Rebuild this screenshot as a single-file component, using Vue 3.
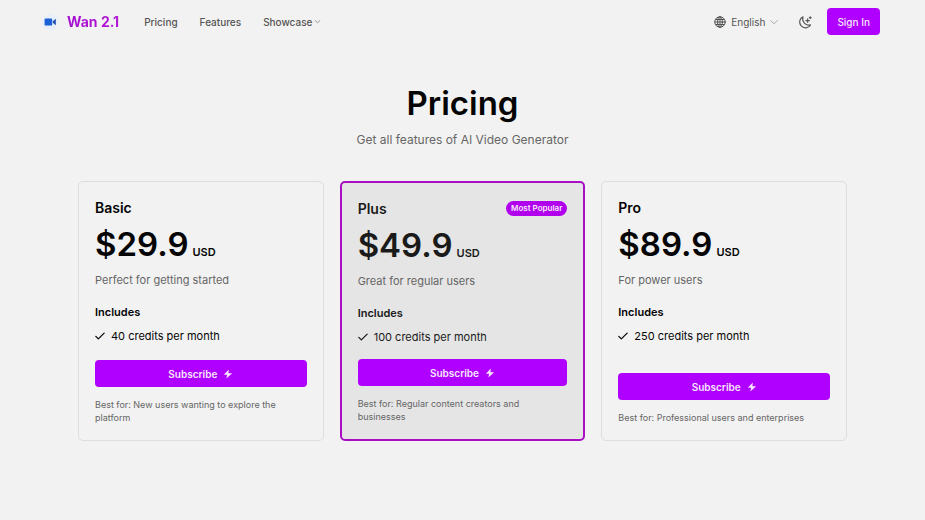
<script setup>
const plans = [
  {
    name: 'Basic',
    price: '$29.9',
    description: 'Perfect for getting started',
    feature: '40 credits per month',
    note: 'Best for: New users wanting to explore the platform',
  },
  {
    name: 'Plus',
    price: '$49.9',
    description: 'Great for regular users',
    feature: '100 credits per month',
    note: 'Best for: Regular content creators and businesses',
    badge: 'Most Popular',
  },
  {
    name: 'Pro',
    price: '$89.9',
    description: 'For power users',
    feature: '250 credits per month',
    note: 'Best for: Professional users and enterprises',
  },
]
</script>

<template>
  <div class="page">
    <header class="header">
      <a class="brand" href="#">
        <svg class="logo" viewBox="0 0 16 16" aria-hidden="true">
          <circle cx="8" cy="8" r="8" fill="#e8eefa" />
          <rect x="2.6" y="4.4" width="7.6" height="7.2" rx="1.2" fill="#1c5fd6" />
          <path d="M10.8 7.2 13.8 4.8v6.4l-3-2.4z" fill="#1c4fae" />
        </svg>
        <span class="brand-name">Wan 2.1</span>
      </a>
      <nav class="nav">
        <a href="#pricing">Pricing</a>
        <a href="#features">Features</a>
        <button type="button" class="nav-menu">
          Showcase
          <svg class="caret" viewBox="0 0 24 24" aria-hidden="true"><path d="m4 9 8 7 8-7" /></svg>
        </button>
      </nav>
      <div class="actions">
        <button type="button" class="language">
          <svg class="globe" viewBox="0 0 24 24" aria-hidden="true">
            <circle cx="12" cy="12" r="10.5" />
            <ellipse cx="12" cy="12" rx="4.8" ry="10.5" />
            <path d="M12 2v20M2 12h20M3.5 7h17M3.5 17h17" />
          </svg>
          <span>English</span>
          <svg class="chevron" viewBox="0 0 24 24" aria-hidden="true"><path d="m2 8 10 9 10-9" /></svg>
        </button>
        <button type="button" class="theme" aria-label="Toggle theme">
          <svg viewBox="0 0 24 24" aria-hidden="true">
            <path d="M8.5 3A10 10 0 1 0 21.5 17 11 11 0 0 1 8.500 3z" />
            <path d="M16.500 6.500v6M13.500 9.500h6M21 3v3M19.500 4.500h3" />
          </svg>
        </button>
        <button type="button" class="sign-in">Sign In</button>
      </div>
    </header>

    <main id="pricing" class="pricing">
      <h1>Pricing</h1>
      <p class="subtitle">Get all features of AI Video Generator</p>

      <div class="plans">
        <section v-for="plan in plans" :key="plan.name" class="plan" :class="{ featured: plan.badge }">
          <div class="plan-head">
            <h2>{{ plan.name }}</h2>
            <span v-if="plan.badge" class="badge">{{ plan.badge }}</span>
          </div>
          <div class="price">
            <span class="amount">{{ plan.price }}</span>
            <span class="currency">USD</span>
          </div>
          <p class="description">{{ plan.description }}</p>
          <h3>Includes</h3>
          <ul>
            <li>
              <svg class="check" viewBox="0 0 24 24" aria-hidden="true"><path d="m2 13 6 6L22 5" /></svg>
              <span>{{ plan.feature }}</span>
            </li>
          </ul>
          <div class="plan-foot">
            <button type="button" class="subscribe">
              Subscribe
              <svg viewBox="0 0 24 24" aria-hidden="true"><path d="M14 1 2 14h8L8 23 22 10h-9z" /></svg>
            </button>
            <p class="note">{{ plan.note }}</p>
          </div>
        </section>
      </div>
    </main>
  </div>
</template>

<style>
body {
  background: #f2f2f2;
}
</style>

<style scoped>
.page {
  min-height: 100vh;
  background: #f2f2f2;
  color: #050505;
  font-family: Inter, "Liberation Sans", sans-serif;
  font-size: 11px;
}

h1, h2, h3, p, ul {
  margin: 0;
  padding: 0;
}

button {
  border: 0;
  padding: 0;
  background: none;
  color: inherit;
  font: inherit;
  cursor: pointer;
}

a {
  color: inherit;
  text-decoration: none;
}

svg {
  flex: none;
  fill: none;
  stroke: currentColor;
  stroke-width: 2;
  stroke-linecap: round;
  stroke-linejoin: round;
}

.header {
  display: flex;
  align-items: center;
  padding: 8px 45px 8px 42px;
  color: #555;
  font-size: 10px;
}

.brand {
  display: flex;
  align-items: center;
  gap: 9px;
}

.logo {
  width: 16px;
  height: 16px;
  stroke: none;
}

.brand-name {
  background: linear-gradient(90deg, #a50fd0, #b316d6);
  background-clip: text;
  color: transparent;
  font-size: 14px;
  font-weight: 700;
}

.nav {
  display: flex;
  align-items: center;
  gap: 22px;
  margin-left: 25px;
  font-weight: 500;
}

.nav-menu {
  display: flex;
  align-items: center;
  gap: 2px;
}

.caret {
  width: 7px;
  height: 7px;
}

.actions {
  display: flex;
  align-items: center;
  margin-left: auto;
}

.language {
  display: flex;
  align-items: center;
  gap: 5px;
}

.globe {
  width: 12px;
  height: 12px;
}

.chevron {
  width: 8px;
  height: 8px;
  color: #858585;
}

.theme {
  display: flex;
  margin: 0 15px 0 20px;
}

.theme svg {
  width: 14px;
  height: 14px;
}

.sign-in {
  height: 27px;
  padding: 0 10px;
  border-radius: 4px;
  background: #b000ff;
  color: #f7e6ff;
  font-weight: 500;
}

.pricing {
  padding: 40px 16px;
  text-align: center;
}

h1 {
  font-size: 33px;
  font-weight: 600;
  line-height: 40px;
}

.subtitle {
  margin-top: 9px;
  color: #666;
  font-size: 12px;
  line-height: 16px;
}

.plans {
  display: grid;
  grid-template-columns: repeat(3, 1fr);
  gap: 16px;
  max-width: 769px;
  margin: 33px auto 0;
  text-align: left;
}

.plan {
  display: flex;
  flex-direction: column;
  padding: 16px;
  border: 1px solid #dedede;
  border-radius: 5px;
}

.featured {
  border: 2px solid #a80fc4;
  background: #e5e5e5;
  color: #1a1a1a;
}

.plan-head {
  display: flex;
  align-items: center;
  justify-content: space-between;
  height: 18px;
}

h2 {
  font-size: 14px;
  font-weight: 600;
}

.badge {
  padding: 0 5px;
  border-radius: 8px;
  background: #b000ee;
  color: #f7e6ff;
  font-size: 8px;
  font-weight: 600;
  line-height: 15px;
}

.price {
  display: flex;
  align-items: baseline;
  gap: 4px;
  margin-top: 11px;
  line-height: 34px;
}

.amount {
  font-size: 33px;
  font-weight: 600;
}

.currency {
  font-weight: 600;
}

.description {
  margin-top: 3px;
  color: #666;
  line-height: 16px;
}

h3 {
  margin-top: 16px;
  font-size: 11px;
  font-weight: 600;
  line-height: 16px;
}

ul {
  margin-top: 8px;
  list-style: none;
}

li {
  display: flex;
  align-items: center;
  gap: 6px;
  line-height: 16px;
}

.check {
  width: 10px;
  height: 10px;
  stroke-width: 3;
}

.plan-foot {
  margin-top: auto;
  padding-top: 14px;
}

.subscribe {
  display: flex;
  align-items: center;
  justify-content: center;
  gap: 6px;
  width: 100%;
  height: 27px;
  border-radius: 4px;
  background: #b000ff;
  color: #f7e6ff;
  font-size: 10px;
  font-weight: 600;
}

.subscribe svg {
  width: 10px;
  height: 10px;
  fill: currentColor;
  stroke: none;
}

.note {
  margin-top: 11px;
  color: #666;
  font-size: 9px;
  line-height: 13px;
}
</style>
